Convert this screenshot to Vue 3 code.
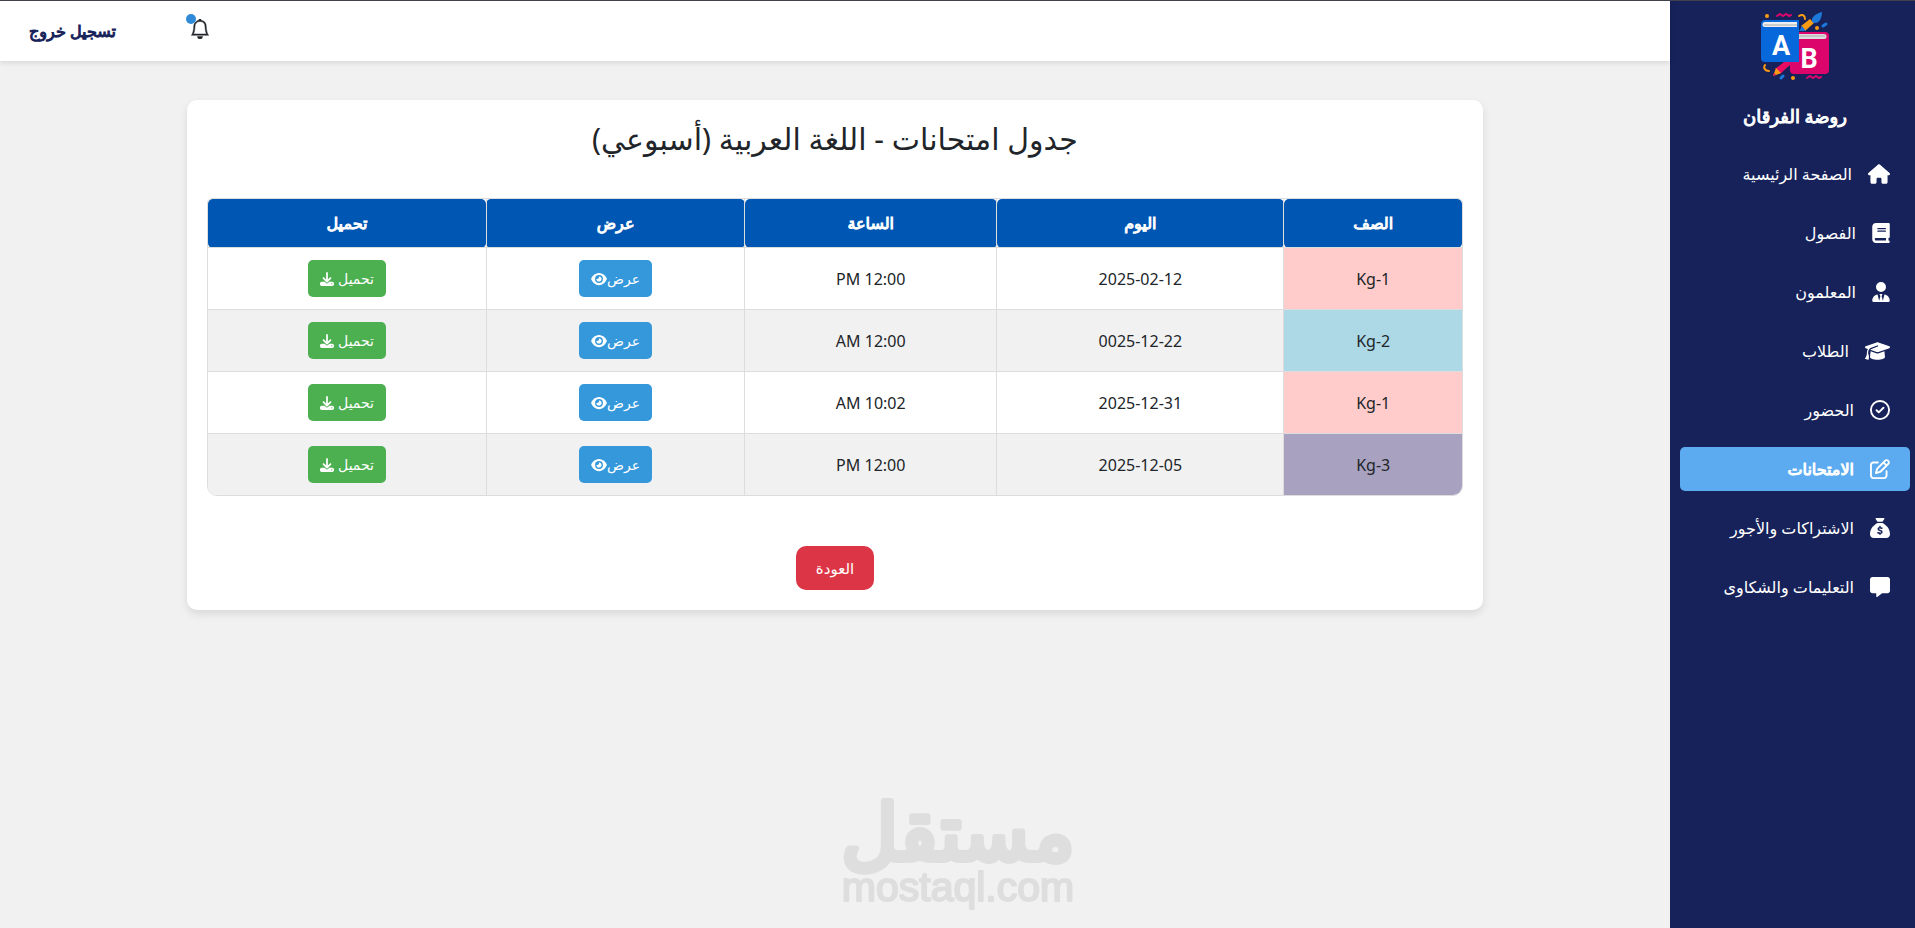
<script setup>
const icons = {
  home: { w: 22, box: '0 0 576 512', d: 'M575.8 255.5c0 18-15 32.1-32 32.1h-32l.7 160.2c0 2.7-.2 5.4-.5 8.1V472c0 22.1-17.9 40-40 40H456c-1.1 0-2.2 0-3.3-.1c-1.4 .1-2.8 .1-4.2 .1H416 392c-22.1 0-40-17.9-40-40V448 384c0-17.7-14.3-32-32-32H256c-17.7 0-32 14.3-32 32v64 24c0 22.1-17.9 40-40 40H160 128.1c-1.5 0-3-.1-4.5-.2c-1.2 .1-2.4 .2-3.6 .2H104c-22.1 0-40-17.9-40-40V360c0-.9 0-1.9 .1-2.8V287.6H32c-18 0-32-14-32-32.1c0-9 3-17 10-24L266.4 8c7-7 15-8 22-8s15 2 21 7L564.8 231.5c8 7 12 15 11 24z' },
  book: { w: 18, box: '0 0 448 512', d: 'M96 0C43 0 0 43 0 96V416c0 53 43 96 96 96H384h32c17.7 0 32-14.3 32-32s-14.3-32-32-32V384c17.7 0 32-14.3 32-32V32c0-17.7-14.3-32-32-32H384 96zm0 384H352v64H96c-17.7 0-32-14.3-32-32s14.3-32 32-32zm32-240c0-8.8 7.2-16 16-16H336c8.8 0 16 7.2 16 16s-7.2 16-16 16H144c-8.8 0-16-7.2-16-16zm16 48H336c8.8 0 16 7.2 16 16s-7.2 16-16 16H144c-8.8 0-16-7.2-16-16s7.2-16 16-16z' },
  teacher: { w: 18, box: '0 0 448 512', d: 'M224 256A128 128 0 1 0 224 0a128 128 0 1 0 0 256zM209.1 359.2l-18.6-31c-6.4-10.7 1.3-24.2 13.7-24.2H224h19.7c12.4 0 20.1 13.6 13.7 24.2l-18.6 31 33.4 123.9 39.5-161.2c77.2 12 136.3 78.8 136.3 159.4c0 17-13.8 30.7-30.7 30.7H265 183 30.7C13.8 512 0 498.2 0 481.3c0-80.6 59.1-147.4 136.3-159.4l39.5 161.2 33.4-123.9z' },
  cap: { w: 25, box: '0 0 640 512', d: 'M320 32c-8.1 0-16.1 1.4-23.7 4.1L15.8 137.4C6.3 140.9 0 149.9 0 160s6.3 19.1 15.8 22.6l57.9 20.9C57.3 229.3 48 259.8 48 291.9v28.1c0 28.4-10.8 57.7-22.3 80.8c-6.5 13-13.9 25.8-22.5 37.6C0 442.7-.9 448.3 .9 453.4s6 8.9 11.2 10.2l64 16c4.2 1.1 8.7 .3 12.4-2s6.3-6.1 7.1-10.4c8.6-42.8 4.3-81.2-2.1-108.7C90.3 344.3 86 329.8 80 316.5V291.9c0-30.2 10.2-58.7 27.9-81.5c12.9-15.5 29.6-28 49.2-35.7l157-61.7c8.2-3.2 17.5 .8 20.7 9s-.8 17.5-9 20.7l-157 61.7c-12.4 4.9-23.3 12.4-32.2 21.6l159.6 57.6c7.6 2.7 15.6 4.1 23.7 4.1s16.1-1.4 23.7-4.1L624.2 182.6c9.5-3.4 15.8-12.5 15.8-22.6s-6.3-19.1-15.8-22.6L343.7 36.1C336.1 33.4 328.1 32 320 32zM128 408c0 35.3 86 72 192 72s192-36.7 192-72L496.7 262.6 354.5 314c-11.1 4-22.8 6-34.5 6s-23.5-2-34.5-6L143.3 262.6 128 408z' },
  check: { w: 20, box: '0 0 512 512', line: 'M256 24a232 232 0 1 0 0 464a232 232 0 1 0 0-464zM168 262l56 56 120-120' },
  edit: { w: 20, box: '0 0 512 512', d: 'M441 58.9L453.1 71c9.4 9.4 9.4 24.6 0 33.9L424 134.1 377.9 88 407 58.9c9.4-9.4 24.6-9.4 33.9 0zM209.8 256.2L344 121.9 390.1 168 255.8 302.2c-2.9 2.9-6.5 5-10.4 6.1l-58.5 16.7 16.7-58.5c1.1-3.9 3.2-7.5 6.1-10.4zM373.1 25L175.8 222.2c-8.7 8.7-15 19.4-18.3 31.1l-28.6 100c-2.4 8.4-.1 17.4 6.1 23.6s15.2 8.5 23.6 6.1l100-28.6c11.8-3.4 22.5-9.7 31.1-18.3L487 138.9c28.1-28.1 28.1-73.7 0-101.8L474.9 25C446.8-3.1 401.2-3.1 373.1 25zM88 64C39.4 64 0 103.4 0 152V424c0 48.6 39.4 88 88 88H360c48.6 0 88-39.4 88-88V312c0-13.3-10.7-24-24-24s-24 10.7-24 24V424c0 22.1-17.9 40-40 40H88c-22.1 0-40-17.9-40-40V152c0-22.1 17.9-40 40-40H200c13.3 0 24-10.7 24-24s-10.7-24-24-24H88z' },
  money: { w: 20, box: '0 0 512 512', d: 'M320 96H192L144.6 24.9C137.5 14.2 145.1 0 157.9 0H354.1c12.8 0 20.4 14.2 13.3 24.9L320 96zM192 128H320c3.8 2.5 8.1 5.3 13 8.4C389.7 172.7 512 250.9 512 416c0 53-43 96-96 96H96c-53 0-96-43-96-96C0 250.9 122.3 172.7 179 136.4c4.8-3.1 9.2-5.9 13-8.4z', cut: 'M256 218v28M256 390v28M306 262c-18-10-34-14-52-14c-28 0-46 13-46 34c0 48 98 24 98 74c0 22-18 36-48 36c-22 0-38-6-56-14' },
  message: { w: 20, box: '0 0 512 512', d: 'M64 0C28.7 0 0 28.7 0 64V352c0 35.3 28.7 64 64 64h96v80c0 6.1 3.4 11.6 8.8 14.3s11.9 2.1 16.8-1.5L309.3 416H448c35.3 0 64-28.7 64-64V64c0-35.3-28.7-64-64-64H64z' }
}

const menu = [
  { label: 'الصفحة الرئيسية', icon: icons.home },
  { label: 'الفصول', icon: icons.book },
  { label: 'المعلمون', icon: icons.teacher },
  { label: 'الطلاب', icon: icons.cap },
  { label: 'الحضور', icon: icons.check },
  { label: 'الامتحانات', icon: icons.edit, active: true },
  { label: 'الاشتراكات والأجور', icon: icons.money },
  { label: 'التعليمات والشكاوى', icon: icons.message }
]

const exams = [
  { grade: 'Kg-1', tone: 'pink', day: '2025-02-12', time: '12:00 PM' },
  { grade: 'Kg-2', tone: 'blue', day: '0025-12-22', time: '12:00 AM' },
  { grade: 'Kg-1', tone: 'pink', day: '2025-12-31', time: '10:02 AM' },
  { grade: 'Kg-3', tone: 'purple', day: '2025-12-05', time: '12:00 PM' }
]
</script>

<template>
  <div class="page" dir="rtl">
    <aside class="sidebar">
      <svg class="logo" viewBox="0 0 68 68" aria-hidden="true">
        <rect x="29" y="20" width="39" height="42" rx="4" fill="#dc056c" />
        <path d="M38 22h25a2 2 0 0 1 0 5H38z" fill="#ddd" />
        <path d="M38 24h26" stroke="#aaa" />
        <path d="M4 8h34v42H4a4 4 0 0 1-4-4V12a4 4 0 0 1 4-4z" fill="#0768dc" />
        <path d="M4 10h32v5H4a2 2 0 0 1 0-5z" fill="#eee" />
        <path d="M3 13h33" stroke="#aaa" />
        <path d="M44 19l-4-5 9-7 4 4z" fill="#fb9b12" />
        <path d="M38 19l3-5 4 5z" fill="#1874dc" />
        <path d="M51 10c-1-5 3-8 10-10c0 6-3 12-8 11z" fill="#1d78dc" />
        <path d="M23 50h6v3l-10 9-5-5z" fill="#ea0b62" />
        <path d="M15 56l5 5-8 3z" fill="#fb9b12" />
        <path d="M12 64l1-3 2 2z" fill="#ea0b62" />
        <g fill="none" stroke-width="2" stroke-linecap="round">
          <path d="M16 4l3-2 3 2 3-2 3 2 2-1M46 66l3-2 3 2 3-2 3 2 2-1" stroke="#dc056c" />
          <path d="M38 4c3-2 6-1 6 3M4 53c-2 3 0 6 4 6" stroke="#fb9b12" />
          <path d="M62 14l3-2M20 66l2-2" stroke="#1d78dc" stroke-width="3" />
        </g>
        <circle cx="6" cy="4" r="2" fill="#fb9b12" /><circle cx="56" cy="16" r="2" fill="#fb9b12" /><circle cx="32" cy="66" r="2" fill="#fb9b12" />
        <text x="20" y="43" class="letter">A</text>
        <text x="48" y="56" class="letter">B</text>
      </svg>
      <h1 class="brand">روضة الفرقان</h1>
      <nav class="menu">
        <a v-for="item in menu" :key="item.label" href="#" class="item" :class="{ active: item.active }">
          <svg :width="item.icon.w" height="20" :viewBox="item.icon.box" aria-hidden="true">
            <path v-if="item.icon.d" :d="item.icon.d" fill="currentColor" />
            <path v-if="item.icon.line" :d="item.icon.line" class="line" />
            <path v-if="item.icon.cut" :d="item.icon.cut" class="cut" />
          </svg>
          <span>{{ item.label }}</span>
        </a>
      </nav>
    </aside>

    <div class="content">
      <header class="topbar">
        <button class="bell" type="button" aria-label="الإشعارات">
          <svg width="20" height="20" viewBox="0 0 16 16" fill="currentColor" aria-hidden="true"><path d="M8 16a2 2 0 0 0 2-2H6a2 2 0 0 0 2 2M8 1.918l-.797.161A4 4 0 0 0 4 6c0 .628-.134 2.197-.459 3.742-.16.767-.376 1.566-.663 2.258h10.244c-.287-.692-.502-1.490-.663-2.258C12.134 8.197 12 6.628 12 6a4 4 0 0 0-3.203-3.920zM14.220 12c.223.447.481.801.780 1H1c.299-.199.557-.553.780-1C2.680 10.200 3 6.880 3 6c0-2.420 1.720-4.440 4.005-4.901a1 1 0 1 1 1.990 0A5 5 0 0 1 13 6c0 .880.320 4.200 1.220 6" stroke="currentColor" stroke-width=".4" /></svg>
          <span class="dot"></span>
        </button>
        <a href="#" class="logout">تسجيل خروج</a>
      </header>

      <main class="card">
        <h2 class="title">جدول امتحانات - اللغة العربية (أسبوعي)</h2>
        <div class="frame">
          <table>
            <colgroup>
              <col class="c-grade" /><col class="c-day" /><col class="c-time" /><col class="c-view" /><col class="c-load" />
            </colgroup>
            <thead>
              <tr><th>الصف</th><th>اليوم</th><th>الساعة</th><th>عرض</th><th>تحميل</th></tr>
            </thead>
            <tbody>
              <tr v-for="exam in exams" :key="exam.day">
                <td :class="exam.tone">{{ exam.grade }}</td>
                <td>{{ exam.day }}</td>
                <td>{{ exam.time }}</td>
                <td>
                  <button class="action view" type="button">
                    <span>عرض</span>
                    <svg width="16" height="14" viewBox="0 0 576 512" fill="currentColor" aria-hidden="true"><path d="M288 32c-80.8 0-145.5 36.8-192.6 80.6C48.6 156 17.3 208 2.5 243.7c-3.3 7.9-3.3 16.7 0 24.6C17.3 304 48.6 356 95.4 399.4C142.5 443.2 207.2 480 288 480s145.5-36.8 192.6-80.6c46.8-43.5 78.1-95.4 93-131.1c3.3-7.9 3.3-16.7 0-24.6c-14.9-35.7-46.2-87.7-93-131.1C433.5 68.8 368.8 32 288 32zM144 256a144 144 0 1 1 288 0 144 144 0 1 1 -288 0zm144-64c0 35.3-28.7 64-64 64c-7.1 0-13.9-1.2-20.3-3.3c-5.5-1.8-11.9 1.6-11.7 7.4c.3 6.9 1.3 13.8 3.2 20.7c13.7 51.2 66.4 81.6 117.6 67.9s81.6-66.4 67.9-117.6c-11.1-41.5-47.8-69.4-88.6-71.1c-5.8-.2-9.2 6.1-7.4 11.7c2.1 6.4 3.3 13.2 3.3 20.3z" /></svg>
                  </button>
                </td>
                <td>
                  <button class="action load" type="button">
                    <span>تحميل</span>
                    <svg width="14" height="14" viewBox="0 0 512 512" fill="currentColor" aria-hidden="true"><path d="M288 32c0-17.7-14.3-32-32-32s-32 14.3-32 32V274.7l-73.4-73.4c-12.5-12.5-32.8-12.5-45.3 0s-12.5 32.8 0 45.3l128 128c12.5 12.5 32.8 12.5 45.3 0l128-128c12.5-12.5 12.5-32.8 0-45.3s-32.8-12.5-45.3 0L288 274.7V32zM64 352c-35.3 0-64 28.7-64 64v32c0 35.3 28.7 64 64 64H448c35.3 0 64-28.7 64-64V416c0-35.3-28.7-64-64-64H346.5l-45.3 45.3c-25 25-65.5 25-90.5 0L165.5 352H64zm368 56a24 24 0 1 1 0 48 24 24 0 1 1 0-48z" /></svg>
                  </button>
                </td>
              </tr>
            </tbody>
          </table>
        </div>
        <button class="back" type="button">العودة</button>
      </main>
    </div>

    <svg class="watermark" viewBox="0 0 240 120" aria-hidden="true">
      <text x="120" y="60" class="mark-ar">مستقل</text>
      <text x="120" y="101" class="mark-en">mostaql.com</text>
    </svg>
  </div>
</template>

<style>
body { background: #f1f1f1; }
</style>

<style scoped>
.page {
  display: flex;
  min-height: 100vh;
  box-sizing: border-box;
  border-top: 1px solid #40434f;
  background: #f1f1f1;
  color: #212529;
  font: 16px/24px "Noto Sans", "DejaVu Sans", sans-serif;
}
.sidebar {
  flex: 0 0 245px;
  box-sizing: border-box;
  padding: 11px 5px 0 10px;
  background: #162259;
  color: #fff;
  text-align: center;
}
.logo { display: block; width: 68px; height: 68px; margin: 0 auto; }
.letter { fill: #fff; font: bold 27px Roboto, sans-serif; text-anchor: middle; }
.brand { margin: 22px 0; font-size: 18px; line-height: 28px; font-weight: 400; -webkit-text-stroke: 1px currentColor; }
.menu { display: flex; flex-direction: column; gap: 15px; }
.item {
  display: flex;
  align-items: center;
  gap: 16px;
  height: 44px;
  box-sizing: border-box;
  padding: 0 20px;
  border-radius: 5px;
  color: #fff;
  text-decoration: none;
}
.item.active { background: #5caaef; }
.item.active span, .logout, th { font-weight: 400; -webkit-text-stroke: 1px currentColor; }
.line { fill: none; stroke: currentColor; stroke-width: 48; stroke-linecap: round; stroke-linejoin: round; }
.cut { fill: none; stroke: #162259; stroke-width: 38; stroke-linecap: round; }
.content { flex: 1; min-width: 0; }
.topbar {
  display: flex;
  justify-content: flex-end;
  align-items: center;
  gap: 74px;
  height: 60px;
  box-sizing: border-box;
  padding: 0 29px;
  background: #fff;
  box-shadow: 0 2px 5px rgba(0, 0, 0, 0.1);
}
.bell { position: relative; display: flex; padding: 0; border: 0; background: none; color: #212529; margin-bottom: 4px; }
.dot { position: absolute; top: -5px; left: -4px; width: 10px; height: 10px; border-radius: 50%; background: #2f8bd8; }
.logout { color: #162259; text-decoration: none; }
.card {
  max-width: 1296px;
  box-sizing: border-box;
  margin: 39px auto 0;
  padding: 20px;
  border-radius: 10px;
  background: #fff;
  box-shadow: 0 4px 8px rgba(0, 0, 0, 0.1);
  text-align: center;
}
.title { margin: 0 0 40px; font-size: 30px; line-height: 38px; font-weight: 400; }
.frame { overflow: hidden; border: 1px solid #ddd; border-radius: 5px 5px 10px 10px; }
table { width: 100%; table-layout: fixed; border-collapse: collapse; }
.c-grade { width: 14.2%; }
.c-day { width: 22.9%; }
.c-time { width: 20.1%; }
.c-view { width: 20.6%; }
.c-load { width: 22.2%; }
th { height: 48px; padding: 0; border-radius: 5px; background: #0056b3; color: #fff; }
th + th, td + td { border-right: 1px solid #ddd; }
td { height: 61px; padding: 0; border-top: 1px solid #ddd; }
tbody tr:nth-child(even) { background: #f1f1f1; }
.pink { background: #ffcccb; }
.blue { background: #add8e6; }
.purple { background: #a8a1c0; }
.action {
  display: inline-flex;
  align-items: center;
  height: 37px;
  padding: 0 12px;
  border: 0;
  border-radius: 5px;
  color: #fff;
  font: inherit;
  font-size: 14px;
  vertical-align: middle;
}
.view { background: #3498db; }
.load { gap: 4px; background: #4caf50; }
.back {
  height: 44px;
  margin-top: 50px;
  padding: 0 20px;
  border: 0;
  border-radius: 10px;
  background: #dc3545;
  color: #fff;
  font: inherit;
  font-size: 15px;
  vertical-align: top;
}
.watermark { position: fixed; bottom: 8px; left: 50%; width: 240px; height: 120px; margin-left: -120px; overflow: visible; pointer-events: none; }
.mark-ar, .mark-en { fill: #dedede; stroke: #dedede; stroke-linejoin: round; text-anchor: middle; }
.mark-ar { font-family: "DejaVu Sans", sans-serif; font-size: 78px; stroke-width: 6px; }
.mark-en { font-family: "Liberation Sans", sans-serif; font-size: 41px; stroke-width: 2px; }
</style>
